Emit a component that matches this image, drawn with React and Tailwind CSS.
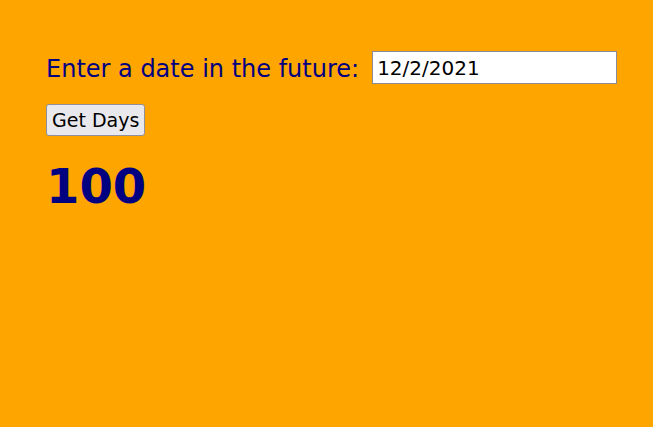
import React, { useState } from 'react';

export default function App() {
  const [date, setDate] = useState('12/2/2021');
  const [days, setDays] = useState(100);

  const getDays = () => {
    const d = new Date(date);
    if (!isNaN(d)) setDays(100);
  };

  return (
    <div
      className="min-h-[427px] w-full bg-[#ffa500] pl-[46px] pr-[20px] pt-[51px] text-[#000080]"
      style={{ fontFamily: '"DejaVu Sans", Verdana, sans-serif' }}
    >
      <div className="flex items-center h-[33px]">
        <label htmlFor="date" className="shrink-0 whitespace-nowrap text-[24px] leading-none mr-[13px] pt-[2px]">
          Enter a date in the future:
        </label>
        <input
          id="date"
          type="text"
          value={date}
          onChange={(e) => setDate(e.target.value)}
          className="shrink-0 w-[245px] h-[33px] bg-white border border-[#8a8a9a] px-[4px] text-[20px] text-black outline-none"
        />
      </div>
      <button
        type="button"
        onClick={getDays}
        className="mt-[20px] h-[32px] px-[5px] bg-[#e9e9ed] border border-[#8f8f9d] rounded-[3px] text-[19px] text-black leading-none"
      >
        Get Days
      </button>
      <div className="mt-[26px] text-[48px] font-bold leading-none">{days}</div>
    </div>
  );
}
